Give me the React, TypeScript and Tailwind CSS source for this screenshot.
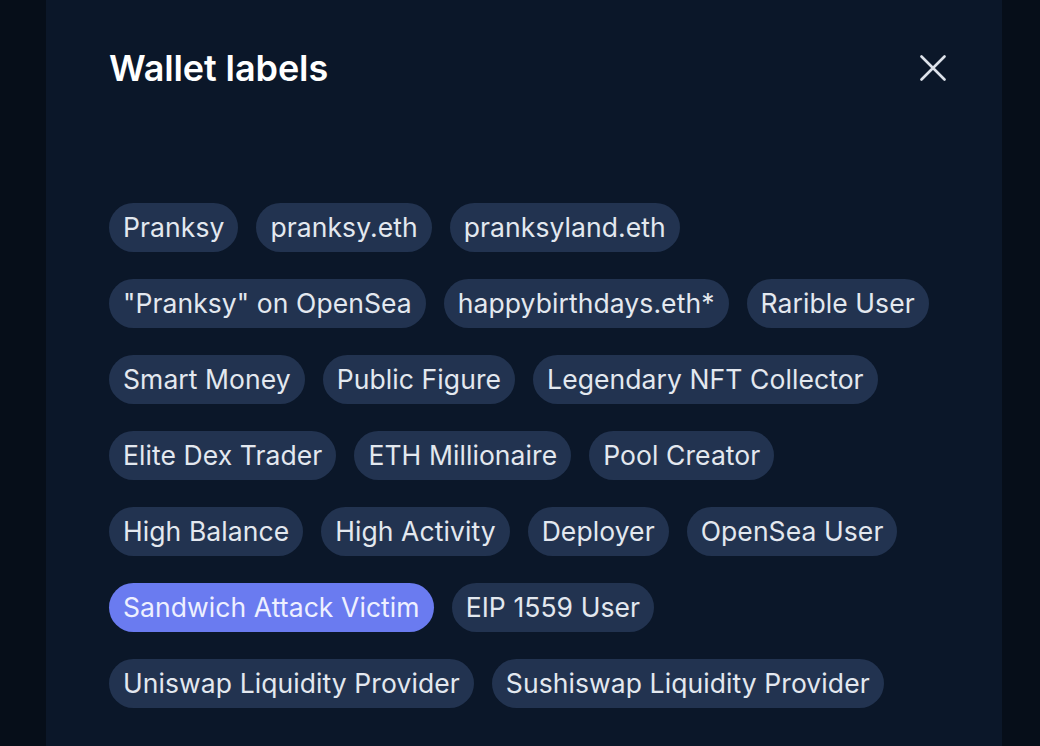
const labels = [
  "Pranksy",
  "pranksy.eth",
  "pranksyland.eth",
  "\"Pranksy\" on OpenSea",
  "happybirthdays.eth*",
  "Rarible User",
  "Smart Money",
  "Public Figure",
  "Legendary NFT Collector",
  "Elite Dex Trader",
  "ETH Millionaire",
  "Pool Creator",
  "High Balance",
  "High Activity",
  "Deployer",
  "OpenSea User",
  "Sandwich Attack Victim",
  "EIP 1559 User",
  "Uniswap Liquidity Provider",
  "Sushiswap Liquidity Provider",
];

const highlighted = "Sandwich Attack Victim";

const App = () => {
  return (
    <div className="w-[1040px] h-[746px] bg-[#060e19] overflow-hidden font-['Inter',sans-serif]">
      <div className="ml-[46px] w-[956px] h-full bg-[#0b1729] pl-[63px] pr-[56px] pt-[48px]">
        {/* Header */}
        <div className="flex items-center justify-between">
          <h2 className="text-[36px] leading-[40px] font-semibold text-white tracking-[-0.1px]">
            Wallet labels
          </h2>
          <svg width="26" height="26" viewBox="0 0 26 26" className="text-[#dde2ea]">
            <path d="M1.5 1.5 24.5 24.5M24.5 1.5 1.5 24.5" stroke="currentColor" strokeWidth="2.6" strokeLinecap="round" />
          </svg>
        </div>

        {/* Labels */}
        <div className="mt-[115px] flex flex-wrap gap-x-[18px] gap-y-[27px] max-w-[836px]">
          {labels.map((label) => (
            <span
              key={label}
              className={
                label === highlighted
                  ? "h-[49px] px-[14px] flex items-center rounded-full bg-[#6a7bf0] text-[#eef0ff] text-[26.5px] tracking-[0.08px]"
                  : "h-[49px] px-[14px] flex items-center rounded-full bg-[#223350] text-[#e3e8ef] text-[26.5px] tracking-[0.08px]"
              }
            >
              {label}
            </span>
          ))}
        </div>
      </div>
    </div>
  );
};

export default App;
